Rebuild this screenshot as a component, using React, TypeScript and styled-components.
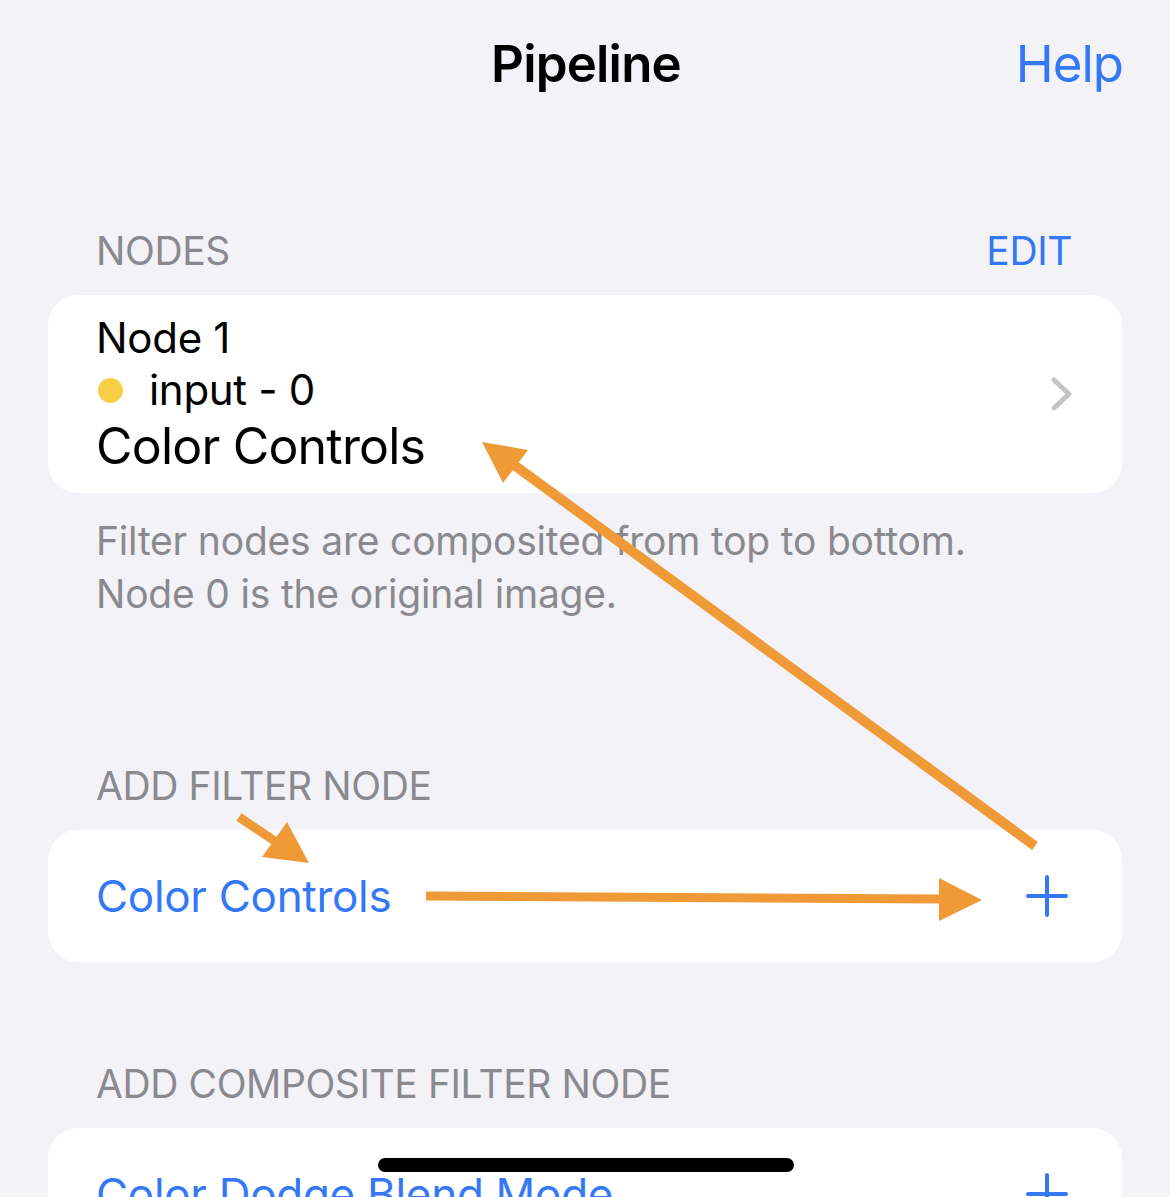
import styled, { createGlobalStyle } from 'styled-components';

const GlobalStyle = createGlobalStyle`
  html, body {
    margin: 0;
    padding: 0;
    background: #f2f2f7;
    font-family: Inter, "Liberation Sans", sans-serif;
    -webkit-font-smoothing: antialiased;
  }
`

const Screen = styled.div`
  position: relative;
  width: 1170px;
  height: 1197px;
  overflow: hidden;
  background: #f2f2f7;
`

const NavBar = styled.div`
  display: grid;
  grid-template-columns: 1fr auto 1fr;
  align-items: center;
  height: 126px;
  padding: 0 47px 0 49px;
`

const Title = styled.div`
  grid-column: 2;
  font-size: 51px;
  line-height: 61px;
  font-weight: 600;
  color: #000;
  letter-spacing: -0.8px;
`

const NavButton = styled.div`
  justify-self: end;
  font-size: 51px;
  line-height: 61px;
  color: #3478f6;
  letter-spacing: -1px;
`

const SectionHeader = styled.div<{ $top: number }>`
  display: flex;
  justify-content: space-between;
  align-items: center;
  margin-top: ${p => p.$top}px;
  padding: 0 98px 0 96px;
  height: 47px;
  font-size: 39px;
  line-height: 47px;
  color: #8a8a8e;
  text-transform: uppercase;
  letter-spacing: -0.4px;
`

const HeaderAction = styled.span`
  color: #3478f6;
`

const Card = styled.div`
  margin: 21px 48px 0;
  background: #fff;
  border-radius: 30px;
  overflow: hidden;
`

const NodeRow = styled.div`
  display: flex;
  align-items: center;
  padding: 17px 48px 17px 48px;
`

const NodeInfo = styled.div`
  flex: 1;
  display: flex;
  flex-direction: column;
`

const NodeName = styled.div`
  font-size: 42px;
  line-height: 52px;
  color: #000;
  letter-spacing: -0.3px;
`

const InputLine = styled.div`
  display: flex;
  align-items: center;
  font-size: 42px;
  line-height: 52px;
  color: #000;
  letter-spacing: -0.3px;
`

const Dot = styled.span`
  width: 25px;
  height: 25px;
  border-radius: 50%;
  background: #f6cf45;
  margin: 0 26px 0 2px;
`

const FilterName = styled.div`
  font-size: 50px;
  line-height: 60px;
  color: #000;
  letter-spacing: -0.8px;
`

const AddRow = styled.div`
  display: flex;
  align-items: center;
  justify-content: space-between;
  height: 132px;
  padding: 0 54px 0 48px;
`

const AddLabel = styled.span`
  font-size: 44px;
  line-height: 60px;
  color: #3478f6;
  letter-spacing: -0.3px;
`

const Footer = styled.div`
  margin-top: 21px;
  padding: 0 96px;
  font-size: 39px;
  line-height: 53px;
  color: #8a8a8e;
  letter-spacing: -0.2px;
`

const Overlay = styled.svg`
  position: absolute;
  left: 0;
  top: 0;
  pointer-events: none;
`

const HomeIndicator = styled.div`
  position: absolute;
  left: 378px;
  top: 1158px;
  width: 416px;
  height: 14px;
  border-radius: 7px;
  background: #000;
`

const Chevron = () => (
  <svg width="24" height="36" viewBox="0 0 24 36">
    <polyline points="4,4 19,18 4,32" fill="none" stroke="#c4c4c7" strokeWidth="5" strokeLinecap="round" strokeLinejoin="round" />
  </svg>
)

const Plus = () => (
  <svg width="42" height="42" viewBox="0 0 42 42">
    <path d="M21 2 V40 M2 21 H40" stroke="#3478f6" strokeWidth="4" strokeLinecap="round" />
  </svg>
)

const orange = '#f09a37'

const App = () => {
  return (
    <>
      <GlobalStyle />
      <Screen>
        <NavBar>
          <Title>Pipeline</Title>
          <NavButton>Help</NavButton>
        </NavBar>

        <SectionHeader $top={101}>
          <span>Nodes</span>
          <HeaderAction>Edit</HeaderAction>
        </SectionHeader>
        <Card>
          <NodeRow>
            <NodeInfo>
              <NodeName>Node 1</NodeName>
              <InputLine><Dot />input - 0</InputLine>
              <FilterName>Color Controls</FilterName>
            </NodeInfo>
            <Chevron />
          </NodeRow>
        </Card>
        <Footer>
          Filter nodes are composited from top to bottom.<br />
          Node 0 is the original image.
        </Footer>

        <SectionHeader $top={142}>
          <span>Add Filter Node</span>
        </SectionHeader>
        <Card>
          <AddRow>
            <AddLabel>Color Controls</AddLabel>
            <Plus />
          </AddRow>
        </Card>

        <SectionHeader $top={98}>
          <span>Add Composite Filter Node</span>
        </SectionHeader>
        <Card>
          <AddRow>
            <AddLabel>Color Dodge Blend Mode</AddLabel>
            <Plus />
          </AddRow>
        </Card>

        <Overlay width="1170" height="1197" viewBox="0 0 1170 1197">
          <line x1="1035" y1="846" x2="510" y2="462" stroke={orange} strokeWidth="10" />
          <polygon points="482,442 528,450 503,483" fill={orange} />
          <line x1="426" y1="896" x2="942" y2="899" stroke={orange} strokeWidth="9" />
          <polygon points="982,900 939,878 939,921" fill={orange} />
          <line x1="239" y1="817" x2="285" y2="848" stroke={orange} strokeWidth="9" />
          <polygon points="309,863 287,822 262,857" fill={orange} />
        </Overlay>
        <HomeIndicator />
      </Screen>
    </>
  );
}

export default App;
